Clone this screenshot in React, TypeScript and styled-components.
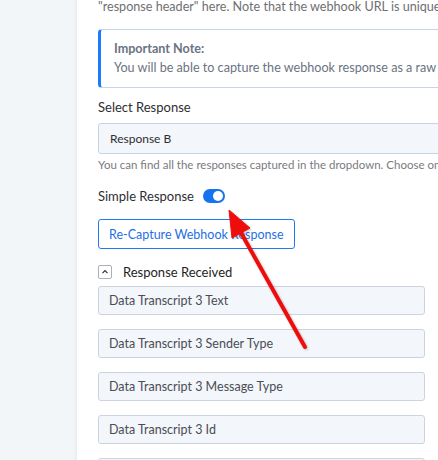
import React from "react";
import styled, { createGlobalStyle } from "styled-components";

const Global = createGlobalStyle`
  html, body {
    margin: 0;
    padding: 0;
    background: #ffffff;
    overflow: hidden;
  }
  body {
    font-family: Lato, "Open Sans", Arial, sans-serif;
    -webkit-font-smoothing: antialiased;
  }
`;

const Page = styled.div`
  position: relative;
  display: flex;
  align-items: flex-start;
  width: 438px;
  height: 460px;
  overflow: hidden;
`;

const Sidebar = styled.aside`
  flex: 0 0 77px;
  align-self: stretch;
  background: #f3f6f9;
  box-shadow: inset -3px 0 4px -2px rgba(0, 0, 0, 0.06);
`;

const Main = styled.main`
  flex: 0 0 auto;
  width: 560px;
  padding: 0 0 0 21px;
  display: flex;
  flex-direction: column;
  & > * {
    flex-shrink: 0;
  }
`;

const Intro = styled.p`
  margin: -1px 0 0;
  font-size: 12.6px;
  line-height: 16px;
  color: #6f6f73;
  white-space: nowrap;
`;

const Note = styled.div`
  margin-top: 14px;
  width: 520px;
  height: 59px;
  box-sizing: border-box;
  border: 1px solid #c9d3e6;
  border-left: 3px solid #1a7cff;
  border-radius: 4px;
  padding: 9px 0 0 13px;
  color: #6a7382;
  font-size: 12.6px;
  line-height: 19px;
  white-space: nowrap;
`;

const NoteTitle = styled.div`
  font-weight: 700;
`;

const Label = styled.div`
  margin-top: 10px;
  font-size: 13px;
  line-height: 18px;
  color: #2e2e33;
`;

const SelectBox = styled.div`
  margin-top: 7px;
  width: 520px;
  height: 31px;
  box-sizing: border-box;
  background: #f3f6fa;
  border: 1px solid #c6d3e6;
  border-radius: 3px;
  padding-left: 11px;
  display: flex;
  align-items: center;
  font-size: 12px;
  color: #2e2e33;
`;

const Help = styled.div`
  margin-top: 3px;
  font-size: 11.5px;
  line-height: 16px;
  color: #7a7a80;
  white-space: nowrap;
`;

const ToggleRow = styled.div`
  margin-top: 14px;
  display: flex;
  align-items: center;
  gap: 9px;
  height: 18px;
  font-size: 13px;
  color: #2e2e33;
`;

const Toggle = styled.span<{ $on: boolean }>`
  position: relative;
  display: inline-block;
  width: 22px;
  height: 14px;
  border-radius: 7px;
  background: ${(p) => (p.$on ? "#1673f0" : "#c5ccd6")};
  &::after {
    content: "";
    position: absolute;
    top: 2px;
    left: ${(p) => (p.$on ? "10px" : "2px")};
    width: 10px;
    height: 10px;
    border-radius: 50%;
    background: #ffffff;
  }
`;

const OutlineButton = styled.button`
  margin-top: 14px;
  align-self: flex-start;
  height: 30px;
  padding: 0 10px;
  background: #ffffff;
  border: 1px solid #1f7bf2;
  border-radius: 3px;
  color: #1f6fe5;
  font-family: inherit;
  font-size: 12.5px;
`;

const CollapseRow = styled.div`
  margin-top: 15px;
  display: flex;
  align-items: center;
  gap: 11px;
  height: 16px;
  font-size: 13px;
  color: #1e1e24;
`;

const Chevron = styled.span`
  display: inline-flex;
  align-items: center;
  justify-content: center;
  width: 12px;
  height: 12px;
  border: 1px solid #a9b0ba;
  border-radius: 2px;
  color: #444;
`;

const Fields = styled.div`
  margin-top: 6px;
  display: flex;
  flex-direction: column;
  gap: 14px;
  width: 327px;
`;

const Field = styled.div`
  flex-shrink: 0;
  height: 29px;
  box-sizing: border-box;
  background: #f3f6fa;
  border: 1px solid #ccd3dd;
  border-radius: 3px;
  padding-left: 10px;
  display: flex;
  align-items: center;
  font-size: 12.5px;
  color: #4a4d55;
`;

const Pointer = styled.svg`
  position: absolute;
  left: 0;
  top: 0;
  pointer-events: none;
`;

const fields = [
  "Data Transcript 3 Text",
  "Data Transcript 3 Sender Type",
  "Data Transcript 3 Message Type",
  "Data Transcript 3 Id",
  "",
];

export default function App() {
  return (
    <>
      <Global />
      <Page>
        <Sidebar />
        <Main>
          <Intro>
            "response header" here. Note that the webhook URL is unique for each workflow.
          </Intro>
          <Note>
            <NoteTitle>Important Note:</NoteTitle>
            <div>You will be able to capture the webhook response as a raw body.</div>
          </Note>
          <Label>Select Response</Label>
          <SelectBox>Response B</SelectBox>
          <Help>
            You can find all the responses captured in the dropdown. Choose one to proceed.
          </Help>
          <ToggleRow>
            Simple Response
            <Toggle $on />
          </ToggleRow>
          <OutlineButton>Re-Capture Webhook Response</OutlineButton>
          <CollapseRow>
            <Chevron>
              <svg width="8" height="8" viewBox="0 0 8 8">
                <path d="M1.5 5.2 L4 2.7 L6.5 5.2" fill="none" stroke="#333" strokeWidth="1.2" />
              </svg>
            </Chevron>
            Response Received
          </CollapseRow>
          <Fields>
            {fields.map((f, i) => (
              <Field key={i}>{f}</Field>
            ))}
          </Fields>
        </Main>
        <Pointer width="438" height="460" viewBox="0 0 438 460">
          <defs>
            <filter id="arrowShadow" x="-20%" y="-20%" width="140%" height="140%">
              <feDropShadow dx="1" dy="1" stdDeviation="1.2" floodColor="#000" floodOpacity="0.25" />
            </filter>
          </defs>
          <g filter="url(#arrowShadow)" fill="#ee1111" stroke="#ee1111">
            <line x1="305" y1="347" x2="240" y2="231" strokeWidth="4" strokeLinecap="round" />
            <polygon points="229,210 232,238 250,228" strokeWidth="1" strokeLinejoin="round" />
          </g>
        </Pointer>
      </Page>
    </>
  );
}
